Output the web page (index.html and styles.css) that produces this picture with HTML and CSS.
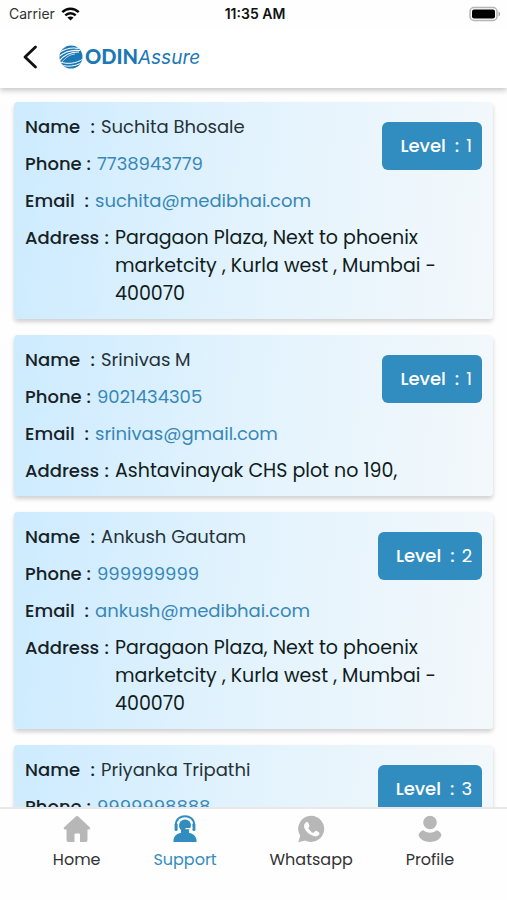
FILE: index.html
```html
<!DOCTYPE html>
<html lang="en">
<head>
<meta charset="utf-8">
<meta name="viewport" content="width=device-width, initial-scale=1">
<title>ODIN Assure Support</title>
<link rel="stylesheet" href="styles.css">
</head>
<body>
<div class="status">
  <div class="carrier">Carrier
    <svg width="19" height="14" viewBox="0 0 19 14" aria-hidden="true"><g fill="none" stroke="#080808" stroke-width="2.5"><path d="M1.3 5.2C6 .6 13 .6 17.700 5.200"/><path d="M4.300 8.400c3-2.900 7.400-2.900 10.400 0"/></g><path d="M6.400 10.500c1.800-1.500 4.400-1.500 6.200 0L9.500 13.600z" fill="#080808"/></svg>
  </div>
  <div class="clock">11:35 AM</div>
  <div class="battery">
    <svg width="32" height="16" viewBox="0 0 32 16" aria-hidden="true"><rect x="1" y="1.500" width="27" height="13" rx="4" fill="#fff" stroke="#b5b5b5" stroke-width="1.500"/><rect x="3" y="3.500" width="23" height="9" rx="2" fill="#000"/><path d="M29.500 5.500c2.200.8 2.200 4.200 0 5z" fill="#aaa"/></svg>
  </div>
</div>
<header class="header">
  <button class="back" type="button" aria-label="Back">
    <svg width="16" height="24" viewBox="0 0 16 24"><path d="M13.500 2 3 12l10.500 10" fill="none" stroke="#111" stroke-width="2.800" stroke-linecap="round" stroke-linejoin="round"/></svg>
  </button>
  <a class="logo" href="#">
    <svg width="24" height="24" viewBox="0 0 24 24" aria-hidden="true">
      <defs><clipPath id="globe"><circle cx="12" cy="12" r="11.500"/></clipPath></defs>
      <g clip-path="url(#globe)"><rect width="24" height="24" fill="#1b78b5"/>
      <g fill="none" stroke="#fff"><path d="M-1 8.500C5 4 12 2 20 3.500" stroke-width="1.200"/><path d="M-1 12.500C5 6.500 12 4.500 21 5.500" stroke-width="1.200"/><path d="M0 16.500C5 9.500 12 7 20 7" stroke-width="1.100"/><path d="M3 17C7 12 11 9.500 16 9" stroke-width=".7"/><path d="M1 17c8 2.500 16 1.500 23-3" stroke-width="1"/><path d="M2 20c7 2 14 1.500 21-2.500" stroke-width="1"/></g></g>
    </svg>
    <span class="wordmark"><span class="odin">ODIN</span><span class="assure">Assure</span></span>
  </a>
</header>
<main class="list">
  <article class="card">
    <div class="level"><b>Level</b><b>:</b><span>1</span></div>
    <div class="row"><div class="label name"><span>Name</span><span>:</span></div><div class="person">Suchita Bhosale</div></div>
    <div class="row"><div class="label phone"><span>Phone</span><span>:</span></div><a href="tel:7738943779">7738943779</a></div>
    <div class="row"><div class="label email"><span>Email</span><span>:</span></div><a href="mailto:suchita@medibhai.com">suchita@medibhai.com</a></div>
    <div class="row"><div class="label address"><span>Address</span><span>:</span></div><div class="place">Paragaon Plaza, Next to phoenix marketcity , Kurla west , Mumbai - 400070</div></div>
  </article>
  <article class="card">
    <div class="level"><b>Level</b><b>:</b><span>1</span></div>
    <div class="row"><div class="label name"><span>Name</span><span>:</span></div><div class="person">Srinivas M</div></div>
    <div class="row"><div class="label phone"><span>Phone</span><span>:</span></div><a href="tel:9021434305">9021434305</a></div>
    <div class="row"><div class="label email"><span>Email</span><span>:</span></div><a href="mailto:srinivas@gmail.com">srinivas@gmail.com</a></div>
    <div class="row"><div class="label address"><span>Address</span><span>:</span></div><div class="place">Ashtavinayak CHS plot no 190,</div></div>
  </article>
  <article class="card">
    <div class="level"><b>Level</b><b>:</b><span>2</span></div>
    <div class="row"><div class="label name"><span>Name</span><span>:</span></div><div class="person">Ankush Gautam</div></div>
    <div class="row"><div class="label phone"><span>Phone</span><span>:</span></div><a href="tel:999999999">999999999</a></div>
    <div class="row"><div class="label email"><span>Email</span><span>:</span></div><a href="mailto:ankush@medibhai.com">ankush@medibhai.com</a></div>
    <div class="row"><div class="label address"><span>Address</span><span>:</span></div><div class="place">Paragaon Plaza, Next to phoenix marketcity , Kurla west , Mumbai - 400070</div></div>
  </article>
  <article class="card">
    <div class="level"><b>Level</b><b>:</b><span>3</span></div>
    <div class="row"><div class="label name"><span>Name</span><span>:</span></div><div class="person">Priyanka Tripathi</div></div>
    <div class="row"><div class="label phone"><span>Phone</span><span>:</span></div><a href="tel:9999998888">9999998888</a></div>
  </article>
</main>
<nav class="tabs">
  <a href="#home"><svg width="28" height="28" viewBox="0 0 28 28" aria-hidden="true"><path d="M12.800 1.500a2 2 0 0 1 2.500 0l11.400 10.800c1 1 .5 2.200-.8 2.200H24.500V25a2 2 0 0 1-2 2H17v-7.500a1 1 0 0 0-1-1h-3.500a1 1 0 0 0-1 1V27H5.500a2 2 0 0 1-2-2V14.500H2c-1.300 0-1.800-1.200-.8-2.200z" fill="#b7b7b7"/></svg>Home</a>
  <a class="active" href="#support" aria-current="page"><svg width="28" height="28" viewBox="0 0 28 28" aria-hidden="true"><g fill="#318dbf"><path d="M2.500 27v-1.500c0-4 3.200-6.800 7.500-7.700 2.500-.6 5.500-.6 8 0 4.300.9 7.500 3.700 7.500 7.700V27z"/><path d="M10 15h8v4h-8z"/><circle cx="14" cy="10.500" r="6"/><rect x="3.600" y="8" width="3" height="8" rx="1.500"/><rect x="21.400" y="8" width="3" height="8" rx="1.500"/></g><path d="M4.800 10C5-1.800 23-1.800 23.200 10" fill="none" stroke="#318dbf" stroke-width="2"/><path d="M14.500 13.600h4.500l2.500-1" fill="none" stroke="#fff" stroke-width="1.200"/></svg>Support</a>
  <a href="#whatsapp"><svg width="28" height="28" viewBox="0 0 28 28" aria-hidden="true"><path d="M14.200.8a13.100 13.100 0 1 1-6.200 24.700L1.300 27.200l1.900-6.400A13.100 13.100 0 0 1 14.200.8" fill="#b7b7b7"/><path d="M9.300 7.200c.8-.5 1.500-.3 1.900.5l1.200 2.700c.3.700-.1 1.300-1.200 2.500 1.200 2.400 3 4 5.400 5 .7-.6 1.200-1.700 1.800-2.100.6-.3 2.700 1 3.700 1.600.6.400.4 2-.5 2.900-1.800 1.700-4.400 1.300-7.400-.2-3.300-1.700-5.500-4.200-6.700-6.800-1.100-2.500-.3-4.900 1.800-6.100" fill="#fff"/></svg>Whatsapp</a>
  <a href="#profile"><svg width="28" height="28" viewBox="0 0 28 28" aria-hidden="true"><g fill="#b7b7b7"><circle cx="14" cy="7.500" r="6.800"/><path d="M7.200 15.300c3.600 3.100 10 3.100 13.600 0 2.300.8 4 2.400 4.700 4.700C22.800 29.300 5.200 29.300 2.500 20c.7-2.300 2.400-3.900 4.700-4.700"/></g></svg>Profile</a>
</nav>
</body>
</html>
```
FILE: styles.css
```css
* { box-sizing: border-box; }
body {
  margin: 0;
  height: 100vh;
  display: flex;
  flex-direction: column;
  background: #fefefe;
  color: #263238;
  font-family: Poppins, Inter, "Liberation Sans", sans-serif;
  font-size: 18px;
  line-height: 28px;
}
a { color: #3787b8; text-decoration: none; }
svg { display: block; flex: none; }

.status {
  display: grid;
  grid-template-columns: 1fr auto 1fr;
  align-items: center;
  height: 28px;
  padding: 0 6px 0 9px;
  font-family: Inter, sans-serif;
  font-size: 14px;
  color: #333;
}
.carrier { display: flex; align-items: center; gap: 6px; }
.clock { font-weight: 600; color: #111; }
.battery { justify-self: end; }

.header {
  display: flex;
  align-items: center;
  gap: 21px;
  height: 60px;
  padding: 0 22px 2px;
  background: #fff;
  box-shadow: 0 2px 6px rgba(0, 0, 0, .25);
  clip-path: inset(0 0 -12px 0);
  z-index: 1;
}
.back { padding: 0; border: 0; background: none; cursor: pointer; }
.logo { display: flex; align-items: center; gap: 2px; color: #1b78b5; }
.wordmark { display: flex; align-items: baseline; }
.odin { font-family: Lato, sans-serif; font-size: 20px; font-weight: 900; }
.assure { font-family: Inter, sans-serif; font-size: 19px; font-style: italic; }

.list {
  flex: 1;
  min-height: 0;
  overflow: auto;
  scrollbar-width: none;
  padding: 14px 14px 0;
}
.card {
  position: relative;
  display: flex;
  flex-direction: column;
  gap: 9px;
  margin-bottom: 16px;
  padding: 11px;
  border-radius: 4px;
  background: linear-gradient(95deg, #cdebff, #e3f3fd 50%, #f3f8fb);
  box-shadow: 0 3px 4px rgba(0, 0, 0, .18);
}
.row { display: flex; gap: 6px; }
.label { display: flex; flex: none; justify-content: space-between; font-weight: 500; color: #172227; }
.name { width: 70px; }
.phone { width: 66px; }
.email { width: 64px; }
.address { width: 84px; }
.place { font-size: 19px; color: #101c21; }
.level {
  position: absolute;
  top: 20px;
  right: 11px;
  display: flex;
  gap: 7px;
  padding: 10px 10px 10px 18px;
  border-radius: 6px;
  background: #318dbf;
  color: #fff;
}
.level b { font-weight: 500; }
.level b:first-child { margin-right: 2px; }

.tabs {
  display: flex;
  justify-content: space-evenly;
  height: 93px;
  padding-top: 6px;
  border-top: 2px solid #e8e8e8;
  background: #fefefe;
  font-size: 16px;
}
.tabs a { display: flex; flex-direction: column; align-items: center; gap: 3px; color: #333; }
.tabs .active { color: #318dbf; }
```
